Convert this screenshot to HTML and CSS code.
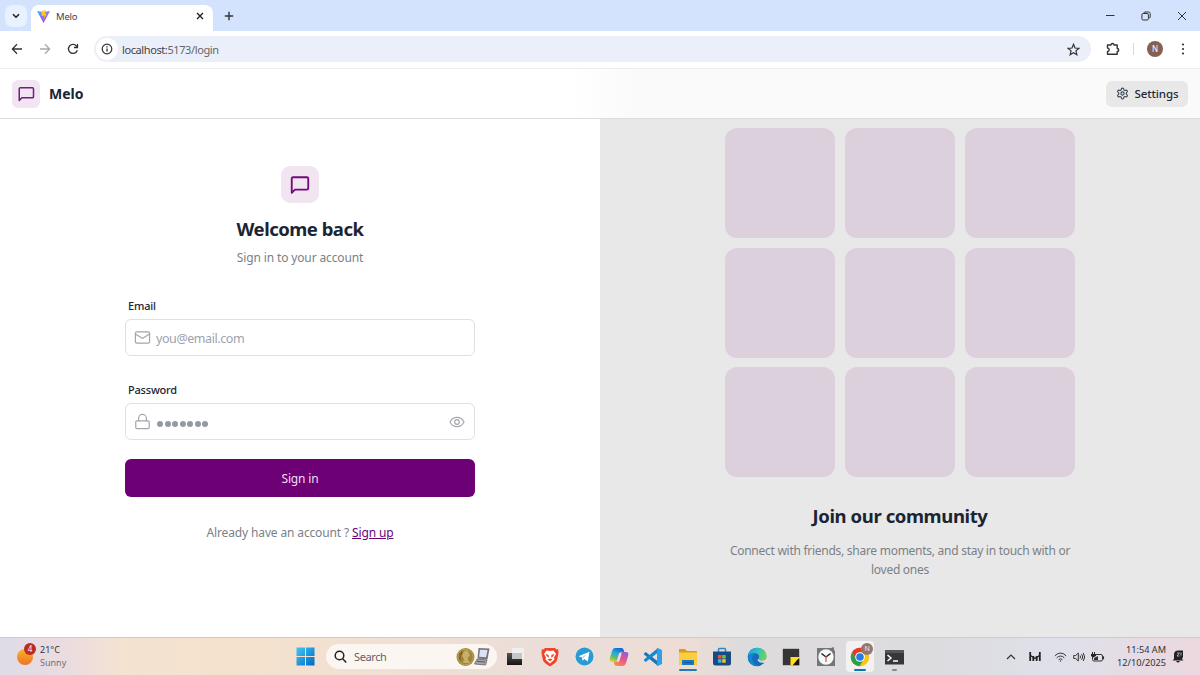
FILE: index.html
```html
<!DOCTYPE html>
<html lang="en">
<head>
  <meta charset="UTF-8">
  <title>Melo</title>
  <link rel="stylesheet" href="styles.css">
</head>
<body>

  <!-- browser window -->
  <div class="tab-strip">
    <div class="tab-search">
      <svg width="8" height="6" viewBox="0 0 8 6"><path d="M1 1.2l3 3 3-3" fill="none" stroke="#222" stroke-width="1.6"/></svg>
    </div>
    <div class="tab">
      <svg width="13" height="13" viewBox="0 0 26 26">
        <defs>
          <linearGradient id="vite" x1="0" y1="0" x2=".7" y2="1"><stop offset="0" stop-color="#35b9fa"/><stop offset="1" stop-color="#bd34fe"/></linearGradient>
          <linearGradient id="bolt" x1="0" y1="0" x2="0" y2="1"><stop offset="0" stop-color="#ffd83e"/><stop offset="1" stop-color="#ff9d00"/></linearGradient>
        </defs>
        <path d="M0 2l13 24L26 2l-12 2z" fill="url(#vite)"/>
        <path d="M9 2l9-2-2 7h4l-7 13 1-8h-5z" fill="url(#bolt)"/>
      </svg>
      <span class="tab-title">Melo</span>
      <svg width="8" height="8" viewBox="0 0 8 8"><path d="M1 1l6 6M7 1L1 7" stroke="#222" stroke-width="1.4"/></svg>
    </div>
    <svg class="new-tab" width="10" height="10" viewBox="0 0 10 10"><path d="M5 .8v8.4M.8 5h8.4" stroke="#333" stroke-width="1.4"/></svg>
    <div class="window-buttons">
      <svg width="10" height="10" viewBox="0 0 10 10"><path d="M1 4.5h8.500" stroke="#333"/></svg>
      <svg width="10" height="10" viewBox="0 0 10 10" fill="none" stroke="#333"><rect x=".9" y="2.500" width="6.500" height="6.500" rx="1.300"/><path d="M3 2.400V2q0-1 1-1h3.500q1.700 0 1.700 1.700V6q0 1-1 1"/></svg>
      <svg width="10" height="10" viewBox="0 0 10 10"><path d="M1 1l8 8M9 1L1 9" stroke="#333"/></svg>
    </div>
  </div>

  <div class="toolbar">
    <svg width="12" height="12" viewBox="0 0 12 12" fill="none" stroke="#333" stroke-width="1.3"><path d="M11 6H1.500M6 1.300L1.400 6 6 10.700"/></svg>
    <svg width="12" height="12" viewBox="0 0 12 12" fill="none" stroke="#aaa" stroke-width="1.3"><path d="M1 6h9.500M6 1.300L10.600 6 6 10.700"/></svg>
    <svg width="12" height="12" viewBox="0 0 12 12" fill="none" stroke="#333" stroke-width="1.3"><path d="M10.300 7.200A4.500 4.500 0 1 1 9.500 3.100L10.400 4.200M10.500 1v3.500H7"/></svg>
    <div class="address-bar">
      <div class="site-info">
        <svg width="12" height="12" viewBox="0 0 12 12"><circle cx="6" cy="6" r="4.800" fill="none" stroke="#333" stroke-width="1.200"/><path d="M6 5.400v3.200M6 3.300v1.200" stroke="#333" stroke-width="1.300"/></svg>
      </div>
      <span class="url">localhost:<span>5173/login</span></span>
      <svg width="13" height="13" viewBox="0 0 24 24" fill="none" stroke="#333" stroke-width="2.200"><path d="M12 2.500l2.800 6.700 7.200.6-5.500 4.700 1.700 7.100L12 17.800l-6.200 3.800 1.700-7.100L2 9.800l7.200-.6z"/></svg>
    </div>
    <svg class="extensions" width="14" height="14" viewBox="0 0 14 14"><path d="M1.500 3h3.500a1.500 1.500 0 0 1 3 0h3.200v3.500a1.500 1.500 0 0 1 0 3v2.800H1.500V9.500a1.700 1.700 0 0 0 0-3.400z" fill="none" stroke="#333" stroke-width="1.400" stroke-linejoin="round"/></svg>
    <span class="divider"></span>
    <span class="profile">N</span>
    <svg class="menu" width="4" height="12" viewBox="0 0 4 12" fill="#333"><circle cx="2" cy="1.500" r="1.100"/><circle cx="2" cy="6" r="1.100"/><circle cx="2" cy="10.500" r="1.100"/></svg>
  </div>

  <!-- app -->
  <header class="navbar">
    <div class="logo">
      <svg width="18" height="18" viewBox="0 0 24 24" fill="none" stroke="#7b1683" stroke-width="2" stroke-linecap="round" stroke-linejoin="round"><path d="M22 15.500a1.500 1.500 0 0 1-1.500 1.500H6.500L3 20.500V5a1.500 1.500 0 0 1 1.500-1.500h16A1.500 1.500 0 0 1 22 5z"/></svg>
    </div>
    <h1>Melo</h1>
    <button class="settings-btn">
      <svg width="13" height="13" viewBox="0 0 24 24" fill="none" stroke="#374151" stroke-width="2" stroke-linecap="round" stroke-linejoin="round"><path d="M12.220 2h-.44a2 2 0 0 0-2 2v.18a2 2 0 0 1-1 1.730l-.43.25a2 2 0 0 1-2 0l-.15-.08a2 2 0 0 0-2.730.73l-.22.38a2 2 0 0 0 .73 2.730l.15.1a2 2 0 0 1 1 1.720v.51a2 2 0 0 1-1 1.740l-.15.09a2 2 0 0 0-.73 2.730l.22.38a2 2 0 0 0 2.730.73l.15-.08a2 2 0 0 1 2 0l.43.25a2 2 0 0 1 1 1.730V20a2 2 0 0 0 2 2h.44a2 2 0 0 0 2-2v-.18a2 2 0 0 1 1-1.730l.43-.25a2 2 0 0 1 2 0l.15.08a2 2 0 0 0 2.730-.73l.22-.39a2 2 0 0 0-.73-2.730l-.15-.08a2 2 0 0 1-1-1.740v-.5a2 2 0 0 1 1-1.740l.15-.09a2 2 0 0 0 .73-2.730l-.22-.38a2 2 0 0 0-2.730-.73l-.15.08a2 2 0 0 1-2 0l-.43-.25a2 2 0 0 1-1-1.730V4a2 2 0 0 0-2-2z"/><circle cx="12" cy="12" r="3"/></svg>
      <span>Settings</span>
    </button>
  </header>

  <main>
    <section class="login">
      <div class="logo logo-lg">
        <svg width="22" height="22" viewBox="0 0 24 24" fill="none" stroke="#75087d" stroke-width="2" stroke-linecap="round" stroke-linejoin="round"><path d="M21 15.500a1.500 1.500 0 0 1-1.500 1.500H6.500L3 20.500V5a1.500 1.500 0 0 1 1.500-1.500h15A1.500 1.500 0 0 1 21 5z"/></svg>
      </div>
      <h2>Welcome back</h2>
      <p class="subtitle">Sign in to your account</p>

      <form>
        <label>Email</label>
        <div class="field">
          <svg width="17" height="17" viewBox="0 0 24 24"><rect x="2" y="4" width="20" height="16" rx="2"/><path d="M22 7l-8.970 5.700a1.940 1.940 0 0 1-2.060 0L2 7"/></svg>
          <input type="text" placeholder="you@email.com">
        </div>
        <label>Password</label>
        <div class="field">
          <svg width="17" height="17" viewBox="0 0 24 24"><rect x="2.500" y="11" width="19" height="11" rx="1.500"/><path d="M6.500 11V7.500a5.500 5.500 0 0 1 11 0V11"/></svg>
          <div class="dots"><i></i><i></i><i></i><i></i><i></i><i></i><i></i></div>
          <svg width="16" height="16" viewBox="0 0 24 24"><path d="M1.500 12C4 7 7.500 5 12 5s8 2 10.500 7c-2.500 5-6 7-10.500 7s-8-2-10.500-7z"/><circle cx="12" cy="12" r="3.500"/></svg>
        </div>
        <button type="button" class="signin-btn">Sign in</button>
      </form>
      <p class="signup">Already have an account ? <a href="#">Sign up</a></p>
    </section>

    <section class="community">
      <div class="pattern">
        <div></div><div></div><div></div>
        <div></div><div></div><div></div>
        <div></div><div></div><div></div>
      </div>
      <h2>Join our community</h2>
      <p>Connect with friends, share moments, and stay in touch with or<br>loved ones</p>
    </section>
  </main>

  <!-- windows taskbar -->
  <footer class="taskbar">
    <div class="weather">
      <div class="sun"><span class="badge">4</span></div>
      <div><div>21°C</div><div class="cond">Sunny</div></div>
    </div>

    <div class="apps">
      <svg class="start" width="19" height="19" viewBox="0 0 19 19">
        <defs><linearGradient id="win" x1="0" y1="0" x2="1" y2="1"><stop offset="0" stop-color="#42c8f4"/><stop offset="1" stop-color="#0067c8"/></linearGradient></defs>
        <path fill="url(#win)" d="M.5.5h8.500v8.500H.5zM10 .5h8.500v8.500H10zM.5 10h8.500v8.500H.5zM10 10h8.500v8.500H10z"/>
      </svg>
      <div class="search-box">
        <svg width="13" height="13" viewBox="0 0 13 13" fill="none" stroke="#222" stroke-width="1.500"><circle cx="5.500" cy="5.500" r="4.300"/><path d="M8.700 8.700l3.500 3.700"/></svg>
        <span>Search</span>
        <svg width="35" height="20" viewBox="0 0 35 20">
          <circle cx="9.500" cy="10" r="9" fill="#a1843b"/><circle cx="9.500" cy="10" r="7.800" fill="none" stroke="#c5aa61" stroke-width=".8"/>
          <path d="M8 4q4-2 5 2l1 3-2 1v3l2 3H7l1-4-2-3z" fill="#c9ae68"/><path d="M4 6v7M6 4l-1 4" stroke="#6f5923"/>
          <path d="M22.500 1l11 .5-2 11-10-1z" fill="#77737c"/><path d="M24 2.700l7.500.3-1.400 7.300-7-.5z" fill="#dce3f5"/><path d="M21 12l10 1-1.500 5-11-1z" fill="#aaa5ad" stroke="#555" stroke-width=".7"/><path d="M21 14.300l8 .8" stroke="#555"/>
        </svg>
      </div>

      <div class="app"><svg width="20" height="20" viewBox="0 0 20 20"><defs><linearGradient id="tv" x2="0" y2="1"><stop stop-color="#555"/><stop offset="1" stop-color="#151515"/></linearGradient></defs><path d="M2 6h15v12H2z" fill="url(#tv)"/><path d="M7 1h12v11H7z" fill="#efefef"/><path d="M7 6h10v6H7z" fill="#c8c6c4"/></svg></div>

      <div class="app"><svg width="18" height="20" viewBox="0 0 18 20"><path d="M4 1h10l1.500 1.500 1.700-.2.300 4-1.500 7Q15 16 9 19.500 3 16 2 13.300L.5 6.300l.3-4 1.700.2z" fill="#f0432a"/><path d="M5.500 3.500L9 4l3.500-.5L15 7l-2 3.500.5 2L9 16.500 4.500 12.500l.5-2L3 7z" fill="#fff"/><path d="M4.500 7l3 .8.500 3L6 9.500zM13.500 7l-3 .8-.5 3 2-1.300zM6.500 12.500l2.500-1 2.500 1L9 14.300z" fill="#f0432a"/></svg></div>

      <div class="app"><svg width="19" height="19" viewBox="0 0 19 19"><circle cx="9.500" cy="9.500" r="9" fill="#279bd3"/><path d="M3.500 9.300l11-4.500-1.700 9.700-3.500-2.500-1.800 1.700-.4-3.300z" fill="#fff"/><path d="M7.200 10.300l4.900-3.200-3.900 4z" fill="#9cc8de"/></svg></div>

      <div class="app"><svg width="20" height="20" viewBox="0 0 20 20">
        <defs>
          <linearGradient id="cpA" x1=".6" y1="0" x2=".2" y2="1"><stop stop-color="#1568d5"/><stop offset=".4" stop-color="#25aee0"/><stop offset=".7" stop-color="#68bd67"/><stop offset="1" stop-color="#f4cc31"/></linearGradient>
          <linearGradient id="cpB" x1=".8" y1="0" x2=".3" y2="1"><stop stop-color="#8e5cdf"/><stop offset=".5" stop-color="#e8568f"/><stop offset="1" stop-color="#f68b50"/></linearGradient>
        </defs>
        <path d="M6 1h6.500q1.700 0 2.200 2l.5 2h-2.700q-1.500 0-2 1.700L8.700 13Q8 15 6 15H3Q0 15 .8 11.500L3 4Q3.800 1 6 1z" fill="url(#cpA)"/>
        <path d="M14 19H7.500q-1.700 0-2.200-2l-.5-2h2.700q1.500 0 2-1.700L11.300 7Q12 5 14 5h3q3 0 2.200 3.500L17 16q-.8 3-3 3z" fill="url(#cpB)"/>
        <path d="M11.200 7l-2 6.500" stroke="#f1dfd8" stroke-width="2.500" stroke-linecap="round"/>
      </svg></div>

      <div class="app"><svg width="20" height="20" viewBox="0 0 20 20"><path d="M1 6.500L2.700 5 15 14.500V19L1 7.500z" fill="#1477bd"/><path d="M1 13.500L2.700 15 15 5.500V1L1 12.500z" fill="#1688cc"/><path d="M14 .8l5 2.200v14l-5 2.200z" fill="#28a2e9"/></svg></div>

      <div class="app running"><svg width="20" height="18" viewBox="0 0 20 18"><path d="M1 1h6l2 2h10v5H1z" fill="#d99b19"/><path d="M1 4.500h18V17H1z" fill="#fbce3e"/><path d="M4 12h12v5H4z" fill="#1879c9"/><path d="M6 14.500h8" stroke="#125a9b"/></svg></div>

      <div class="app"><svg width="20" height="20" viewBox="0 0 20 20"><path d="M6.500 5V2.500q0-1 1-1h5q1 0 1 1V5" fill="none" stroke="#2989c9" stroke-width="1.500"/><path d="M1 4.500h18V16q0 2.500-2.500 2.500h-13Q1 18.500 1 16z" fill="#174c83"/><path d="M6 8h3.500v3.500H6z" fill="#ef5536"/><path d="M10.200 8h3.500v3.500h-3.500z" fill="#82bc32"/><path d="M6 12.200h3.500v3.500H6z" fill="#38b6ee"/><path d="M10.200 12.200h3.500v3.500h-3.500z" fill="#fbc02a"/></svg></div>

      <div class="app"><svg width="20" height="20" viewBox="0 0 20 20">
        <defs><linearGradient id="edge" x2="1" y2=".3"><stop stop-color="#1b9bdf"/><stop offset=".6" stop-color="#35c1c6"/><stop offset="1" stop-color="#68d456"/></linearGradient></defs>
        <circle cx="10" cy="10" r="9.300" fill="#156db9"/>
        <path d="M.8 9Q2 .8 10.500.8q8.700.5 8.900 8.400 0 4-4.500 4.300-4 0-3-2 1.300-4-3.400-5.200Q3.500 5.500.8 9z" fill="url(#edge)"/>
        <path d="M12 11.500q-1 2 3 2 4.300-.4 4.500-3.500v5.500l-2.500.3q-5.500.5-6.500-3z" fill="#dedbdb"/>
        <path d="M8.300 6.500Q4 8.500 5.500 13.500 7.200 18 12 19 3 20 1 12.500.3 6.300 8.300 6.500z" fill="#1386d2"/>
      </svg></div>

      <div class="app"><svg width="18" height="18" viewBox="0 0 18 18"><path d="M.8.8h16.400v16.400H.8z" fill="#353535"/><path d="M8.500 9h8.700v1.500l-6.500 6.700H8.500z" fill="#ffde20"/><path d="M17.200 10.700v6.500h-6.500v-6.500z" fill="#17150b"/><path d="M17.200 9.500h-8v7.700h1.500z" fill="#ffde20"/></svg></div>

      <div class="app"><svg width="20" height="20" viewBox="0 0 20 20"><path d="M1 1h14l3-1v3l1 1v15H1z" fill="#727579"/><circle cx="10" cy="10" r="7.700" fill="#f8f8f8"/><path d="M10 10L5.500 6.500M10 10l4.500-3.500" stroke="#222" stroke-width="1.500"/><path d="M10 9v6" stroke="#c15b45" stroke-width="1.200"/></svg></div>

      <div class="app active">
        <svg width="20" height="20" viewBox="0 0 20 20"><circle cx="10" cy="10" r="9.200" fill="#f9c513"/><path d="M2 5.300A9.200 9.200 0 0 1 18 5.400H10L6 12.300z" fill="#e23a2d"/><path d="M2 5.300A9.200 9.200 0 0 0 9.500 19.200L14 12 6 12.300z" fill="#2c9f4c"/><circle cx="10" cy="10" r="4.800" fill="#fff"/><circle cx="10" cy="10" r="3.800" fill="#247ce5"/></svg>
        <span class="mini-profile">N</span>
      </div>

      <div class="app idle"><svg width="19" height="16" viewBox="0 0 19 16"><path d="M0 1h19v14.500H0z" fill="#373737"/><path d="M0 1h19v3H0z" fill="#555"/><path d="M2.500 6L6 9l-3.500 3M8 12h5" fill="none" stroke="#fff" stroke-width="1.500"/></svg></div>
    </div>

    <div class="tray">
      <svg width="10" height="6" viewBox="0 0 10 6"><path d="M1 5l4-4 4 4" fill="none" stroke="#333" stroke-width="1.200"/></svg>
      <svg width="12" height="9" viewBox="0 0 12 9"><path d="M1.200 0v9M10.800 0v9M4.300 4v5M7.700 4v5" stroke="#222" stroke-width="1.800"/><path d="M1.500 3.500L6 6.500l4.500-3" fill="none" stroke="#222" stroke-width="1.400"/></svg>
      <svg width="13" height="10" viewBox="0 0 13 10" fill="none" stroke="#333"><path d="M.8 3.800q5.700-5.500 11.400 0M2.700 5.800q3.800-3.500 7.600 0M4.600 7.600q1.900-1.700 3.800 0"/><circle cx="6.500" cy="9" r=".7" fill="#333" stroke="none"/></svg>
      <svg width="12" height="10" viewBox="0 0 12 10" fill="none" stroke="#333"><path d="M.7 3.500h2L5.300 1v8L2.700 6.500h-2zM7 3.500q1 1.500 0 3M8.700 2.200q2 2.800 0 5.600M10.300 1q2.600 4 0 8"/></svg>
      <svg width="14" height="10" viewBox="0 0 14 10"><rect x="1.500" y="2.500" width="10" height="6.500" rx="1.500" fill="none" stroke="#333"/><path d="M3 6l4-2v4H3z" fill="#333"/><path d="M12.300 4.300v3" stroke="#333" stroke-width="1.500"/><path d="M1 0v2H0v2l2 1.500L5 4V2H4V0H3v2H2V0z" fill="#222"/></svg>
      <div class="clock"><div>11:54 AM</div><div>12/10/2025</div></div>
      <svg class="bell" width="12" height="13" viewBox="0 0 12 13"><path d="M2 9V4.500q0-4 4.500-4H11V7l-1 2 1.500 1.500H.5zM4 11h4q-2 3-4 0z" fill="#222"/><path d="M5 3h2.500L5 6h2.500M9 2.500v3" fill="none" stroke="#ccc" stroke-width=".8"/></svg>
    </div>
  </footer>

</body>
</html>
```
FILE: styles.css
```css
* {
  box-sizing: border-box;
}
body {
  margin: 0;
  width: 1200px;
  height: 675px;
  overflow: hidden;
  display: flex;
  flex-direction: column;
  font-family: "Noto Sans", "Open Sans", sans-serif;
  color: #1b2433;
  background: #fff;
}
svg {
  display: block;
  flex-shrink: 0;
}
h1, h2, p {
  margin: 0;
}
button, input {
  font-family: inherit;
  border: none;
}

/* browser */
.tab-strip {
  height: 31px;
  display: flex;
  align-items: center;
  background: #d3e2fd;
  padding-left: 5px;
  flex-shrink: 0;
}
.tab-search {
  width: 22px;
  height: 22px;
  border-radius: 7px;
  background: #e9f0fe;
  display: flex;
  align-items: center;
  justify-content: center;
}
.tab {
  width: 182px;
  height: 26px;
  align-self: flex-end;
  margin-left: 4px;
  padding: 0 9px 4px 6px;
  border-radius: 8px 8px 0 0;
  background: #fff;
  display: flex;
  align-items: center;
}
.tab-title {
  flex: 1;
  margin-left: 6px;
  font-size: 9.5px;
  letter-spacing: -0.2px;
  color: #444;
}
.new-tab {
  margin-left: 11px;
}
.window-buttons {
  display: flex;
  gap: 26px;
  margin-left: auto;
  padding-right: 13px;
}
.toolbar {
  height: 38px;
  flex-shrink: 0;
  display: flex;
  align-items: center;
  padding: 0 15px 1px 11px;
  gap: 16px;
  border-bottom: 1px solid #ebedf0;
}
.address-bar {
  flex: 1;
  height: 26px;
  margin-left: -1px;
  padding: 0 11px 0 2px;
  border-radius: 13px;
  background: #ebeffa;
  display: flex;
  align-items: center;
}
.site-info {
  width: 22px;
  height: 22px;
  border-radius: 50%;
  background: #fff;
  display: flex;
  align-items: center;
  justify-content: center;
}
.url {
  flex: 1;
  margin-left: 4px;
  font-size: 11px;
  letter-spacing: -0.4px;
  color: #444;
}
.url span {
  color: #666;
}
.extensions {
  margin-left: -1px;
}
.divider {
  width: 1px;
  height: 12px;
  margin-left: -3px;
  background: #c6dafb;
}
.profile {
  width: 16px;
  height: 16px;
  margin-left: -3px;
  border-radius: 50%;
  background: #855f54;
  color: #fff;
  font-size: 8px;
  line-height: 16px;
  text-align: center;
}
.menu {
  margin-left: 2px;
}

/* navbar */
.navbar {
  height: 50px;
  flex-shrink: 0;
  display: flex;
  align-items: center;
  padding: 0 12px;
  border-bottom: 1px solid #dcdcdd;
  background: linear-gradient(90deg, #fff 570px, #fafafa 635px);
}
.logo {
  width: 28px;
  height: 28px;
  border-radius: 6px;
  background: #f0e5f1;
  display: flex;
  align-items: center;
  justify-content: center;
}
.navbar h1 {
  margin-left: 9px;
  font-size: 14px;
  font-weight: 700;
}
.settings-btn {
  width: 82px;
  height: 26px;
  margin-left: auto;
  padding: 0;
  border-radius: 6px;
  background: #e8e8e8;
  color: #1f2937;
  font-size: 11.5px;
  font-weight: 500;
  letter-spacing: -0.1px;
  display: flex;
  align-items: center;
  justify-content: center;
  gap: 6px;
}

/* page */
main {
  flex: 1;
  display: grid;
  grid-template-columns: 1fr 1fr;
}
.login {
  display: flex;
  flex-direction: column;
  align-items: center;
  padding-top: 47px;
}
.logo-lg {
  width: 38px;
  height: 37px;
  border-radius: 9px;
}
h2 {
  font-size: 18.5px;
  line-height: 26px;
  font-weight: 700;
  letter-spacing: -0.4px;
}
.login h2 {
  margin-top: 13px;
  letter-spacing: -0.5px;
}
.subtitle, .signup, .community p {
  font-size: 12px;
  line-height: 19px;
  letter-spacing: -0.14px;
  color: #7b8087;
}
.subtitle {
  margin-top: 6px;
}
form {
  width: 350px;
  margin-top: 29px;
}
label {
  display: block;
  height: 23px;
  padding: 0 3px;
  font-size: 11px;
  line-height: 19px;
  font-weight: 500;
  letter-spacing: -0.2px;
}
.field {
  height: 37px;
  margin-bottom: 24px;
  padding: 0 9px 0 8px;
  border: 1px solid #dfe0e3;
  border-radius: 6px;
  display: flex;
  align-items: center;
}
.field svg {
  fill: none;
  stroke: #a3a6ab;
  stroke-width: 1.7;
  stroke-linecap: round;
  stroke-linejoin: round;
}
.field input {
  flex: 1;
  padding: 2px 0 0;
  margin-left: 5px;
  font-size: 12.5px;
  letter-spacing: -0.42px;
  background: none;
}
.field input::placeholder {
  color: #9ca3af;
}
.dots {
  flex: 1;
  display: flex;
  gap: 1.5px;
  margin: 4px 0 0 6px;
}
.dots i {
  width: 6px;
  height: 6px;
  border-radius: 50%;
  background: #949aa5;
}
.signin-btn {
  display: block;
  width: 350px;
  height: 38px;
  margin-top: -5px;
  border-radius: 6px;
  background: #6e0076;
  color: #f0dff1;
  font-size: 12px;
  letter-spacing: -0.15px;
}
.signup {
  margin-top: 26px;
}
.signup a {
  color: #6e0076;
}
.community {
  display: flex;
  flex-direction: column;
  align-items: center;
  padding-top: 9px;
  text-align: center;
  background: #e8e8e8;
}
.pattern {
  width: 350px;
  display: grid;
  grid-template-columns: repeat(3, 1fr);
  gap: 9.2px 9.5px;
}
.pattern div {
  aspect-ratio: 1;
  border-radius: 12px;
  background: #ddd0dd;
}
.community h2 {
  margin: 26px 0 12px;
}
.community p {
  letter-spacing: -0.27px;
}

/* taskbar */
.taskbar {
  height: 38px;
  flex-shrink: 0;
  display: grid;
  grid-template-columns: 296px 1fr 194px;
  align-items: center;
  border-top: 1px solid #cfcacb;
  background: linear-gradient(90deg, #dfdbe8 0, #ecdcdf 70px, #f4e2d2 120px, #f5e2cd 230px, #f0dfd4 400px, #eaddd9 570px, #eeddd6 685px, #dedbdc 740px, #dcdcdf 930px, #dfe0ea 1060px, #ecd8df 1200px);
}
.weather {
  display: flex;
  padding-left: 17px;
  gap: 7px;
  font-size: 9px;
  line-height: 12.5px;
  color: #333;
}
.cond {
  color: #746f74;
}
.sun {
  position: relative;
  width: 16px;
  height: 16px;
  margin-top: 5px;
  border-radius: 50%;
  background: linear-gradient(#f9b329, #ed7425);
}
.badge {
  position: absolute;
  top: -6px;
  left: 7px;
  width: 12px;
  height: 12px;
  border-radius: 50%;
  background: #bd2b22;
  color: #fff;
  font-size: 8px;
  line-height: 12px;
  text-align: center;
}
.apps {
  display: flex;
  align-items: center;
}
.search-box {
  width: 171px;
  height: 25px;
  margin: 0 1px 0 11px;
  padding: 0 6px 0 8px;
  border-radius: 13px;
  background: #fcf6f2;
  display: flex;
  align-items: center;
}
.search-box span {
  flex: 1;
  margin-left: 7px;
  font-size: 11px;
  letter-spacing: -0.4px;
  color: #66615f;
}
.app {
  position: relative;
  width: 34.5px;
  height: 31px;
  flex-shrink: 0;
  display: flex;
  align-items: center;
  justify-content: center;
}
.running::after, .active::after, .idle::after {
  content: "";
  position: absolute;
  bottom: 1px;
  width: 18px;
  height: 2px;
  border-radius: 1px;
  background: #2879b5;
}
.active {
  width: 28px;
  margin: 0 3.25px;
  border-radius: 4px;
  background: #f3f1f2;
}
.active::after {
  width: 12px;
  background: #0f75b9;
}
.idle::after {
  width: 5px;
  background: #888;
}
.mini-profile {
  position: absolute;
  top: 2px;
  right: 1px;
  width: 12px;
  height: 12px;
  border-radius: 50%;
  background: #94766e;
  color: #eee;
  font-size: 7px;
  line-height: 12px;
  text-align: center;
}
.tray {
  display: flex;
  align-items: center;
  gap: 6px;
}
.tray > svg:nth-child(-n+2) {
  margin-right: 7px;
}
.clock {
  flex: 1;
  font-size: 9.2px;
  line-height: 12.5px;
  text-align: right;
  color: #333;
  white-space: nowrap;
}
.bell {
  margin-right: 16px;
}
```
